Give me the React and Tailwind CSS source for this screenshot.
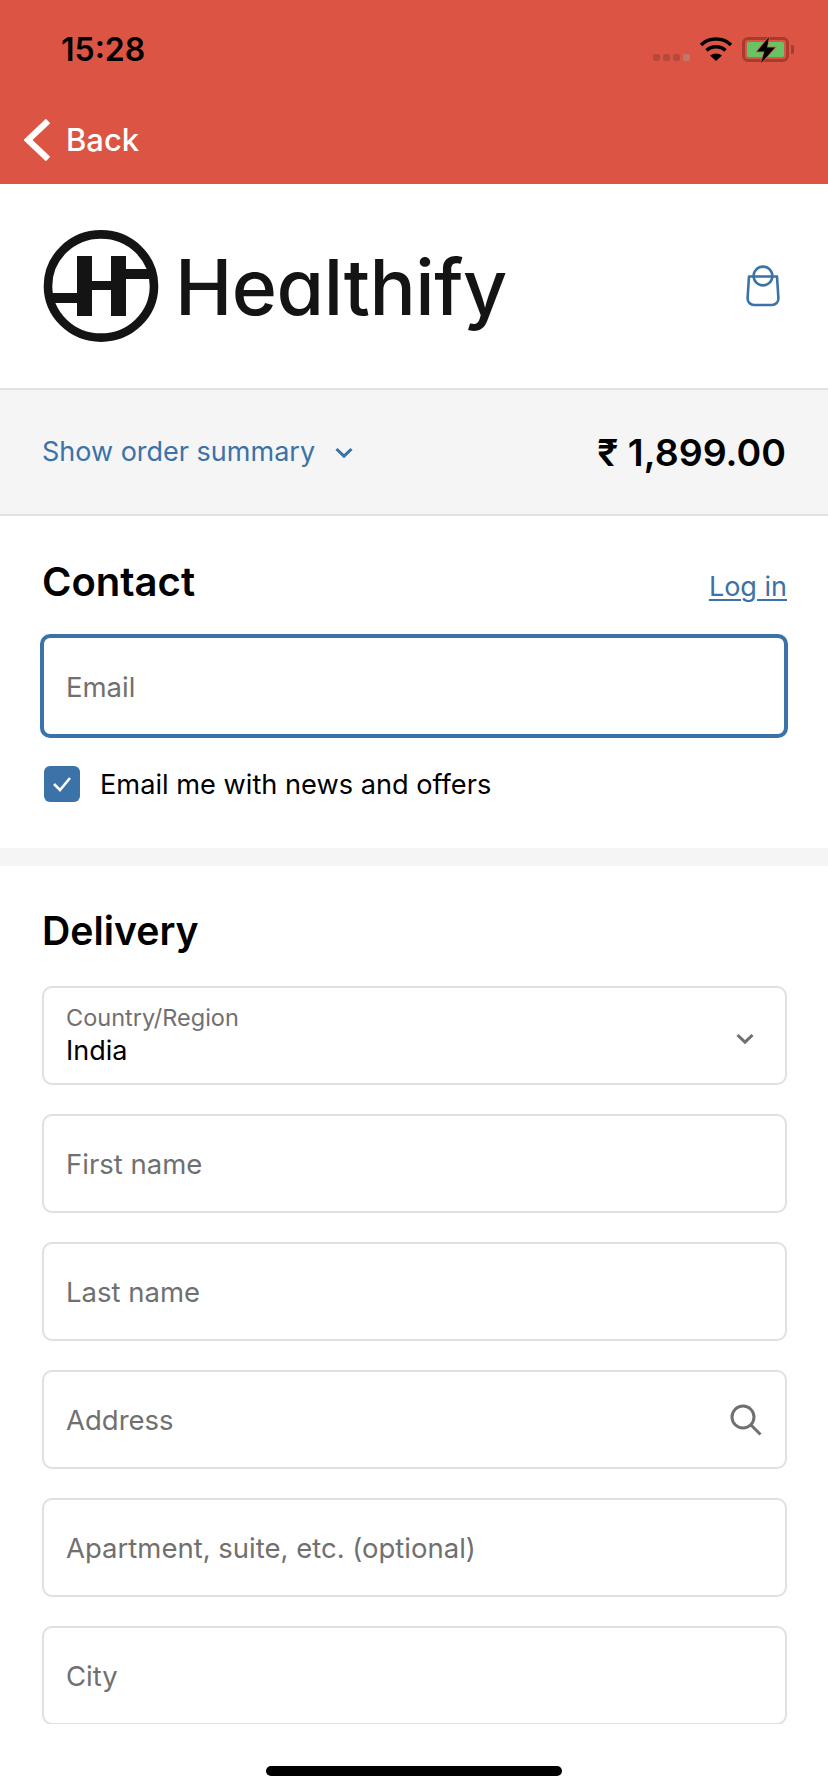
const BLUE = "#3b72a8";

function Logo() {
  return (
    <svg width="116" height="116" viewBox="0 0 116 116" className="shrink-0">
      <ellipse cx="58" cy="58" rx="53" ry="51.600" fill="none" stroke="#141414" strokeWidth="8.600" />
      <path fill="#141414" d="M34 28h15v25h19V28h15v13h26v10H83v37H68V62H49v26H34V75H9V65h25z" />
    </svg>
  );
}

function Bag() {
  return (
    <svg width="34" height="42" viewBox="0 0 34 42" fill="none" stroke={BLUE} strokeWidth="2.6" className="shrink-0">
      <path d="M3 11.5h28l1.4 21.5c.2 4-2.8 7-6.6 7H8.2c-3.8 0-6.8-3-6.6-7z" strokeLinejoin="round" />
      <circle cx="17" cy="11" r="9.4" />
    </svg>
  );
}

function Chevron({ color, w = 18, h = 11, sw = 3 }) {
  return (
    <svg width={w} height={h} viewBox="0 0 18 11" fill="none" stroke={color} strokeWidth={sw} className="shrink-0">
      <path d="M1.5 2L9 9.200 16.500 2" />
    </svg>
  );
}

function StatusIcons() {
  return (
    <div className="flex items-start">
      <div className="flex gap-[3px] mt-[17px] mr-[10px]">
        <span className="w-[7px] h-[7px] rounded-[2px] bg-[#b8483c]" />
        <span className="w-[7px] h-[7px] rounded-[2px] bg-[#b8483c]" />
        <span className="w-[7px] h-[7px] rounded-[2px] bg-[#b8483c]" />
        <span className="w-[7px] h-[7px] rounded-[2px] bg-[#c0776e]" />
      </div>
      <svg width="32" height="25" viewBox="0 0 32 25" className="mr-[10px] shrink-0">
        <path d="M1 8C9 0 23 0 31 8" fill="none" stroke="#000" strokeWidth="3.6" />
        <path d="M6.5 13.5c5.5-5 13.500-5 19 0" fill="none" stroke="#000" strokeWidth="3.6" />
        <path d="M16 24l-6-5.500c3.500-2.700 8.500-2.700 12 0z" fill="#000" />
      </svg>
      <div className="relative w-[52px] h-[25px]">
        <div className="w-[47px] h-[25px] rounded-[6px] border-[3px] border-[#a53c30] p-[2px]">
          <div className="w-full h-full rounded-[2px] bg-[#66c465]" />
        </div>
        <div className="absolute right-0 top-[8px] w-[3px] h-[9px] rounded-r-[2px] bg-[#a53c30]" />
        <svg width="24" height="28" viewBox="0 0 24 28" className="absolute left-[12px] top-[-1px]">
          <path d="M15 1L3 15.500h7.500L7 27 21 11.500h-8z" fill="#000" stroke="#dc5444" strokeWidth="1.6" paintOrder="stroke" />
        </svg>
      </div>
    </div>
  );
}

function Field({ placeholder, icon }) {
  return (
    <div className="shrink-0 h-[99px] rounded-[10px] border-2 border-[#e0e0e0] bg-white flex items-center justify-between pl-[22px] pr-[23px] text-[27.500px] text-[#707070]">
      <span className="mt-[3px]">{placeholder}</span>
      {icon}
    </div>
  );
}

export default function App() {
  return (
    <div className="relative w-[828px] h-[1792px] bg-white overflow-hidden flex flex-col font-['Inter',sans-serif] text-black">
      <header className="h-[184px] shrink-0 bg-[#dc5444] flex flex-col">
        <div className="flex justify-between pl-[61px] pr-[34px] pt-[31px] h-[119px]">
          <span className="text-[32px] leading-[38px] font-semibold">15:28</span>
          <div className="pt-[6px]">
            <StatusIcons />
          </div>
        </div>
        <div className="flex items-center pl-[24px] gap-[16px]">
          <svg width="26" height="42" viewBox="0 0 26 42" fill="none" stroke="#fff" strokeWidth="6.200" className="shrink-0">
            <path d="M24 2L4 21l20 19" />
          </svg>
          <span className="text-white text-[31px] leading-[40px] font-medium">Back</span>
        </div>
      </header>

      <div className="h-[204px] shrink-0 flex items-center justify-between pl-[43px] pr-[48px]">
        <div className="flex items-center gap-[16px]">
          <Logo />
          <span className="text-[77px] leading-none text-[#141414] font-[550] tracking-[-0.5px] mt-[2px] [font-feature-settings:'cv11']">Healthify</span>
        </div>
        <Bag />
      </div>

      <div className="h-[128px] shrink-0 bg-[#f5f5f5] border-y-2 border-[#e1e1e1] flex items-center justify-between pl-[42px] pr-[42px]">
        <div className="flex items-center gap-[20px] text-[27px]" style={{ color: BLUE }}>
          <span>Show order summary</span>
          <Chevron color={BLUE} />
        </div>
        <span className="text-[37.500px] font-semibold mt-[2px]">₹ 1,899.00</span>
      </div>

      <section className="h-[332px] shrink-0 px-[40px] pt-[41px]">
        <div className="flex items-end justify-between pl-[2px] pr-[1px] h-[50px]">
          <h2 className="text-[40px] leading-[50px] font-semibold">Contact</h2>
          <a className="text-[27px] leading-[36px] underline underline-offset-[3px] decoration-2 mb-[2px]" style={{ color: BLUE }}>Log in</a>
        </div>
        <div className="mt-[27px] h-[104px] rounded-[10px] border-[4px] border-[#3b72a8] flex items-center pl-[22px] pt-[3px] text-[27.500px] text-[#707070]">Email</div>
        <div className="mt-[28px] h-[36px] flex items-center gap-[20px] pl-[4px]">
          <div className="w-[36px] h-[36px] rounded-[6px] bg-[#3b72a8] flex items-center justify-center">
            <svg width="20" height="16" viewBox="0 0 20 16" fill="none" stroke="#fff" strokeWidth="2.600">
              <path d="M2 8l6 6L18 2" />
            </svg>
          </div>
          <span className="text-[27.200px] leading-[36px] mt-[1px]">Email me with news and offers</span>
        </div>
      </section>

      <div className="h-[18px] shrink-0 bg-[#f5f5f5]" />

      <section className="h-[858px] shrink-0 overflow-hidden pl-[42px] pr-[41px] pt-[40px]">
        <h2 className="text-[39.200px] leading-[50px] font-semibold">Delivery</h2>
        <div className="mt-[30px] flex flex-col gap-[29px] h-[750px]">
          <div className="shrink-0 h-[99px] rounded-[10px] border-2 border-[#e0e0e0] flex items-center justify-between pl-[22px] pr-[31px]">
            <div className="flex flex-col mt-[-2px]">
              <span className="text-[23.500px] leading-[32px] text-[#707070]">Country/Region</span>
              <span className="text-[27px] leading-[33px]">India</span>
            </div>
            <div className="mt-[5px]">
              <Chevron color="#707070" />
            </div>
          </div>
          <Field placeholder="First name" />
          <Field placeholder="Last name" />
          <Field
            placeholder="Address"
            icon={
              <svg width="32" height="32" viewBox="0 0 32 32" fill="none" stroke="#707070" strokeWidth="3" className="shrink-0">
                <circle cx="13" cy="13" r="11" />
                <path d="M21 21l9.500 9.500" />
              </svg>
            }
          />
          <Field placeholder="Apartment, suite, etc. (optional)" />
          <Field placeholder="City" />
        </div>
      </section>

      <div className="absolute left-[266px] top-[1766px] w-[296px] h-[10px] rounded-full bg-black" />
    </div>
  );
}
